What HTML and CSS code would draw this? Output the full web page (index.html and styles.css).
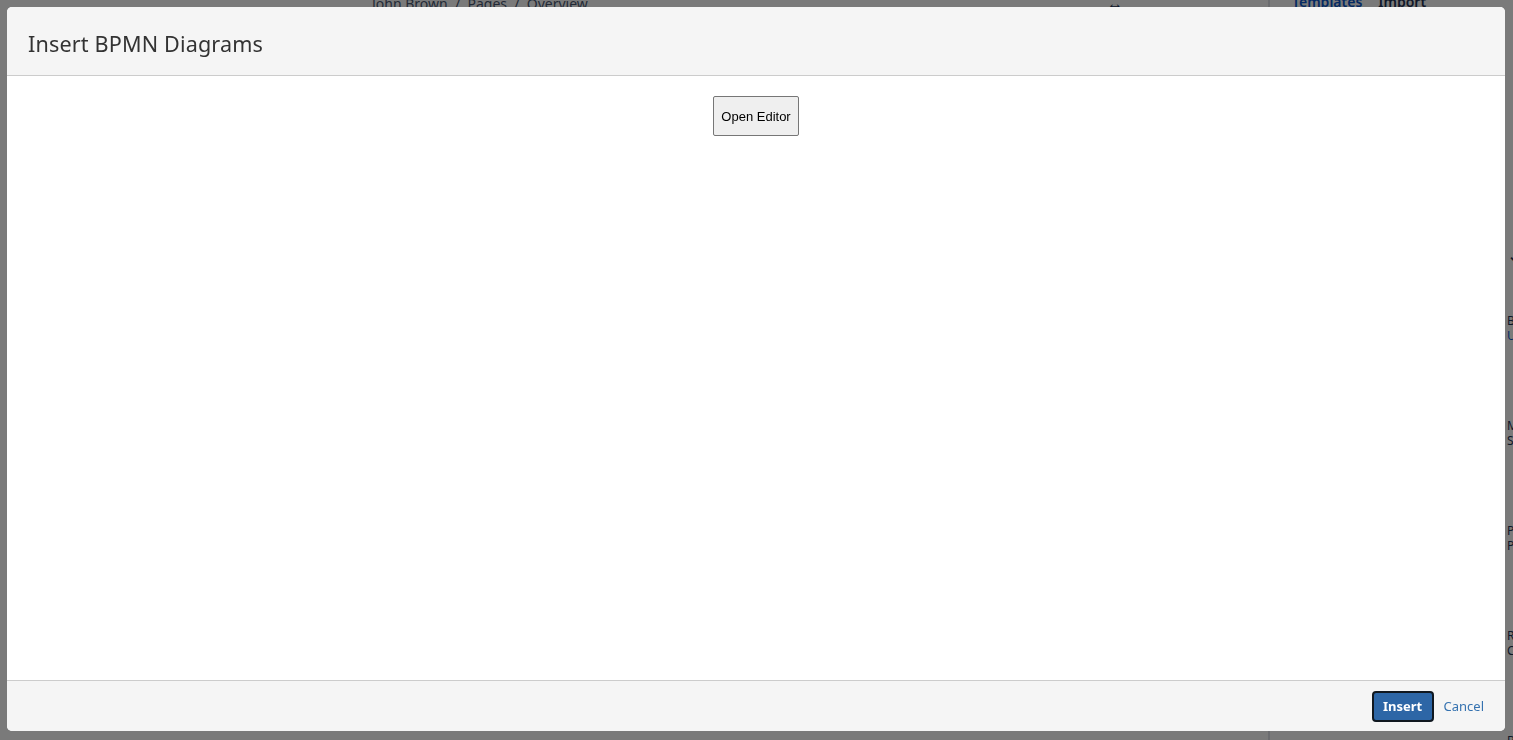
FILE: index.html
```html
<!DOCTYPE html>
<html lang="en">
<head>
  <meta http-equiv="Content-Type" content="text/html;charset=UTF-8">
  <meta name="viewport" content="width=device-width, initial-scale=1.0">
  <link rel="stylesheet" href="styles.css">
</head>
<body>
  <div class="page">
    <div class="page-main">
      <div class="page-header">
        <div class="breadcrumbs">John Brown &nbsp;/&nbsp; Pages &nbsp;/&nbsp; Overview</div>
        <div class="expand-icon">&#8596;</div>
      </div>
    </div>
    <div class="page-side">
      <div class="side-tabs">
        <span class="side-tab active">Templates</span>
        <span class="side-tab">Import</span>
      </div>
      <div class="side-list">
        <div class="side-chevron">&#8964;</div>
        <div class="side-item">Blank with the<br><span class="link">Use this for</span></div>
        <div class="side-item">Meeting all<br>Show what</div>
        <div class="side-item">Product rot<br>Plan and share</div>
        <div class="side-item">Retro status<br>Compose post</div>
        <div class="side-item">Backlog<br>Keep a track</div>
      </div>
    </div>
  </div>

  <div class="overlay"></div>

  <div class="dialog">
    <div class="dialog-header">
      <h2 class="dialog-title">Insert BPMN Diagrams</h2>
    </div>
    <div class="dialog-body">
      <button class="open-editor" type="button">Open Editor</button>
    </div>
    <div class="dialog-footer">
      <button class="btn-insert" type="button">Insert</button>
      <a class="btn-cancel" href="#">Cancel</a>
    </div>
  </div>
</body>
</html>
```

FILE: styles.css
```css
* {
  margin: 0;
  padding: 0;
  box-sizing: border-box;
}

html, body {
  height: 100%;
  overflow: hidden;
}

body {
  font-family: "Noto Sans", "Open Sans", sans-serif;
  background: #fff;
  color: #172b4d;
}

/* dimmed page behind the dialog */
.page {
  display: flex;
  height: 100vh;
  overflow: hidden;
}

.page-main {
  flex: 1;
}

.page-header {
  display: flex;
  justify-content: space-between;
  align-items: flex-start;
  padding: 0 145px 0 372px;
  margin-top: -6px;
  font-size: 14px;
  color: #42526e;
}

.expand-icon {
  font-size: 16px;
  font-weight: bold;
  color: #172b4d;
  line-height: 18px;
}

.page-side {
  width: 245px;
  border-left: 2px solid #dfe1e6;
  padding-left: 22px;
}

.side-tabs {
  display: flex;
  gap: 16px;
  margin-top: -8px;
  font-size: 14px;
  font-weight: 600;
}

.side-tab.active {
  color: #0052cc;
}

.side-list {
  padding-left: 170px;
  font-size: 12px;
  line-height: 15px;
  white-space: nowrap;
  color: #172b4d;
}

.side-chevron {
  margin-top: 238px;
  margin-left: 46px;
  font-size: 14px;
  font-weight: bold;
  line-height: 14px;
}

.side-item {
  margin-top: 75px;
  margin-left: 45px;
}

.side-chevron + .side-item {
  margin-top: 50px;
}

.side-item .link {
  color: #0052cc;
}

.overlay {
  position: fixed;
  inset: 0;
  background: rgba(9, 9, 9, 0.54);
}

/* dialog */
.dialog {
  position: fixed;
  top: 7px;
  left: 7px;
  width: 1498px;
  height: 724px;
  display: flex;
  flex-direction: column;
  background: #fff;
  border-radius: 5px;
  overflow: hidden;
}

.dialog-header {
  height: 69px;
  flex: none;
  display: flex;
  align-items: center;
  padding: 4px 21px 0;
  background: #f5f5f5;
  border-bottom: 1px solid #cccccc;
}

.dialog-title {
  font-size: 21.6px;
  font-weight: 400;
  color: #333333;
  letter-spacing: 0.15px;
}

.dialog-body {
  flex: 1;
  display: flex;
  justify-content: center;
  align-items: flex-start;
  padding-top: 20px;
}

.open-editor {
  width: 86px;
  height: 40px;
  font-family: "Liberation Sans", Arial, sans-serif;
  font-size: 13px;
  color: #000;
  background: #efefef;
  border: 1px solid #767676;
  border-radius: 2px;
}

.dialog-footer {
  height: 51px;
  flex: none;
  display: flex;
  justify-content: flex-end;
  align-items: center;
  gap: 10px;
  padding: 0 21px 0 0;
  background: #f5f5f5;
  border-top: 1px solid #cccccc;
}

.btn-insert {
  width: 62px;
  height: 31px;
  font-family: "Noto Sans", "Open Sans", sans-serif;
  font-size: 13px;
  font-weight: 700;
  color: #fff;
  background: #2d66a6;
  border: 2px solid #101820;
  border-radius: 4px;
}

.btn-cancel {
  font-size: 13px;
  color: #3572b0;
  text-decoration: none;
}
```
